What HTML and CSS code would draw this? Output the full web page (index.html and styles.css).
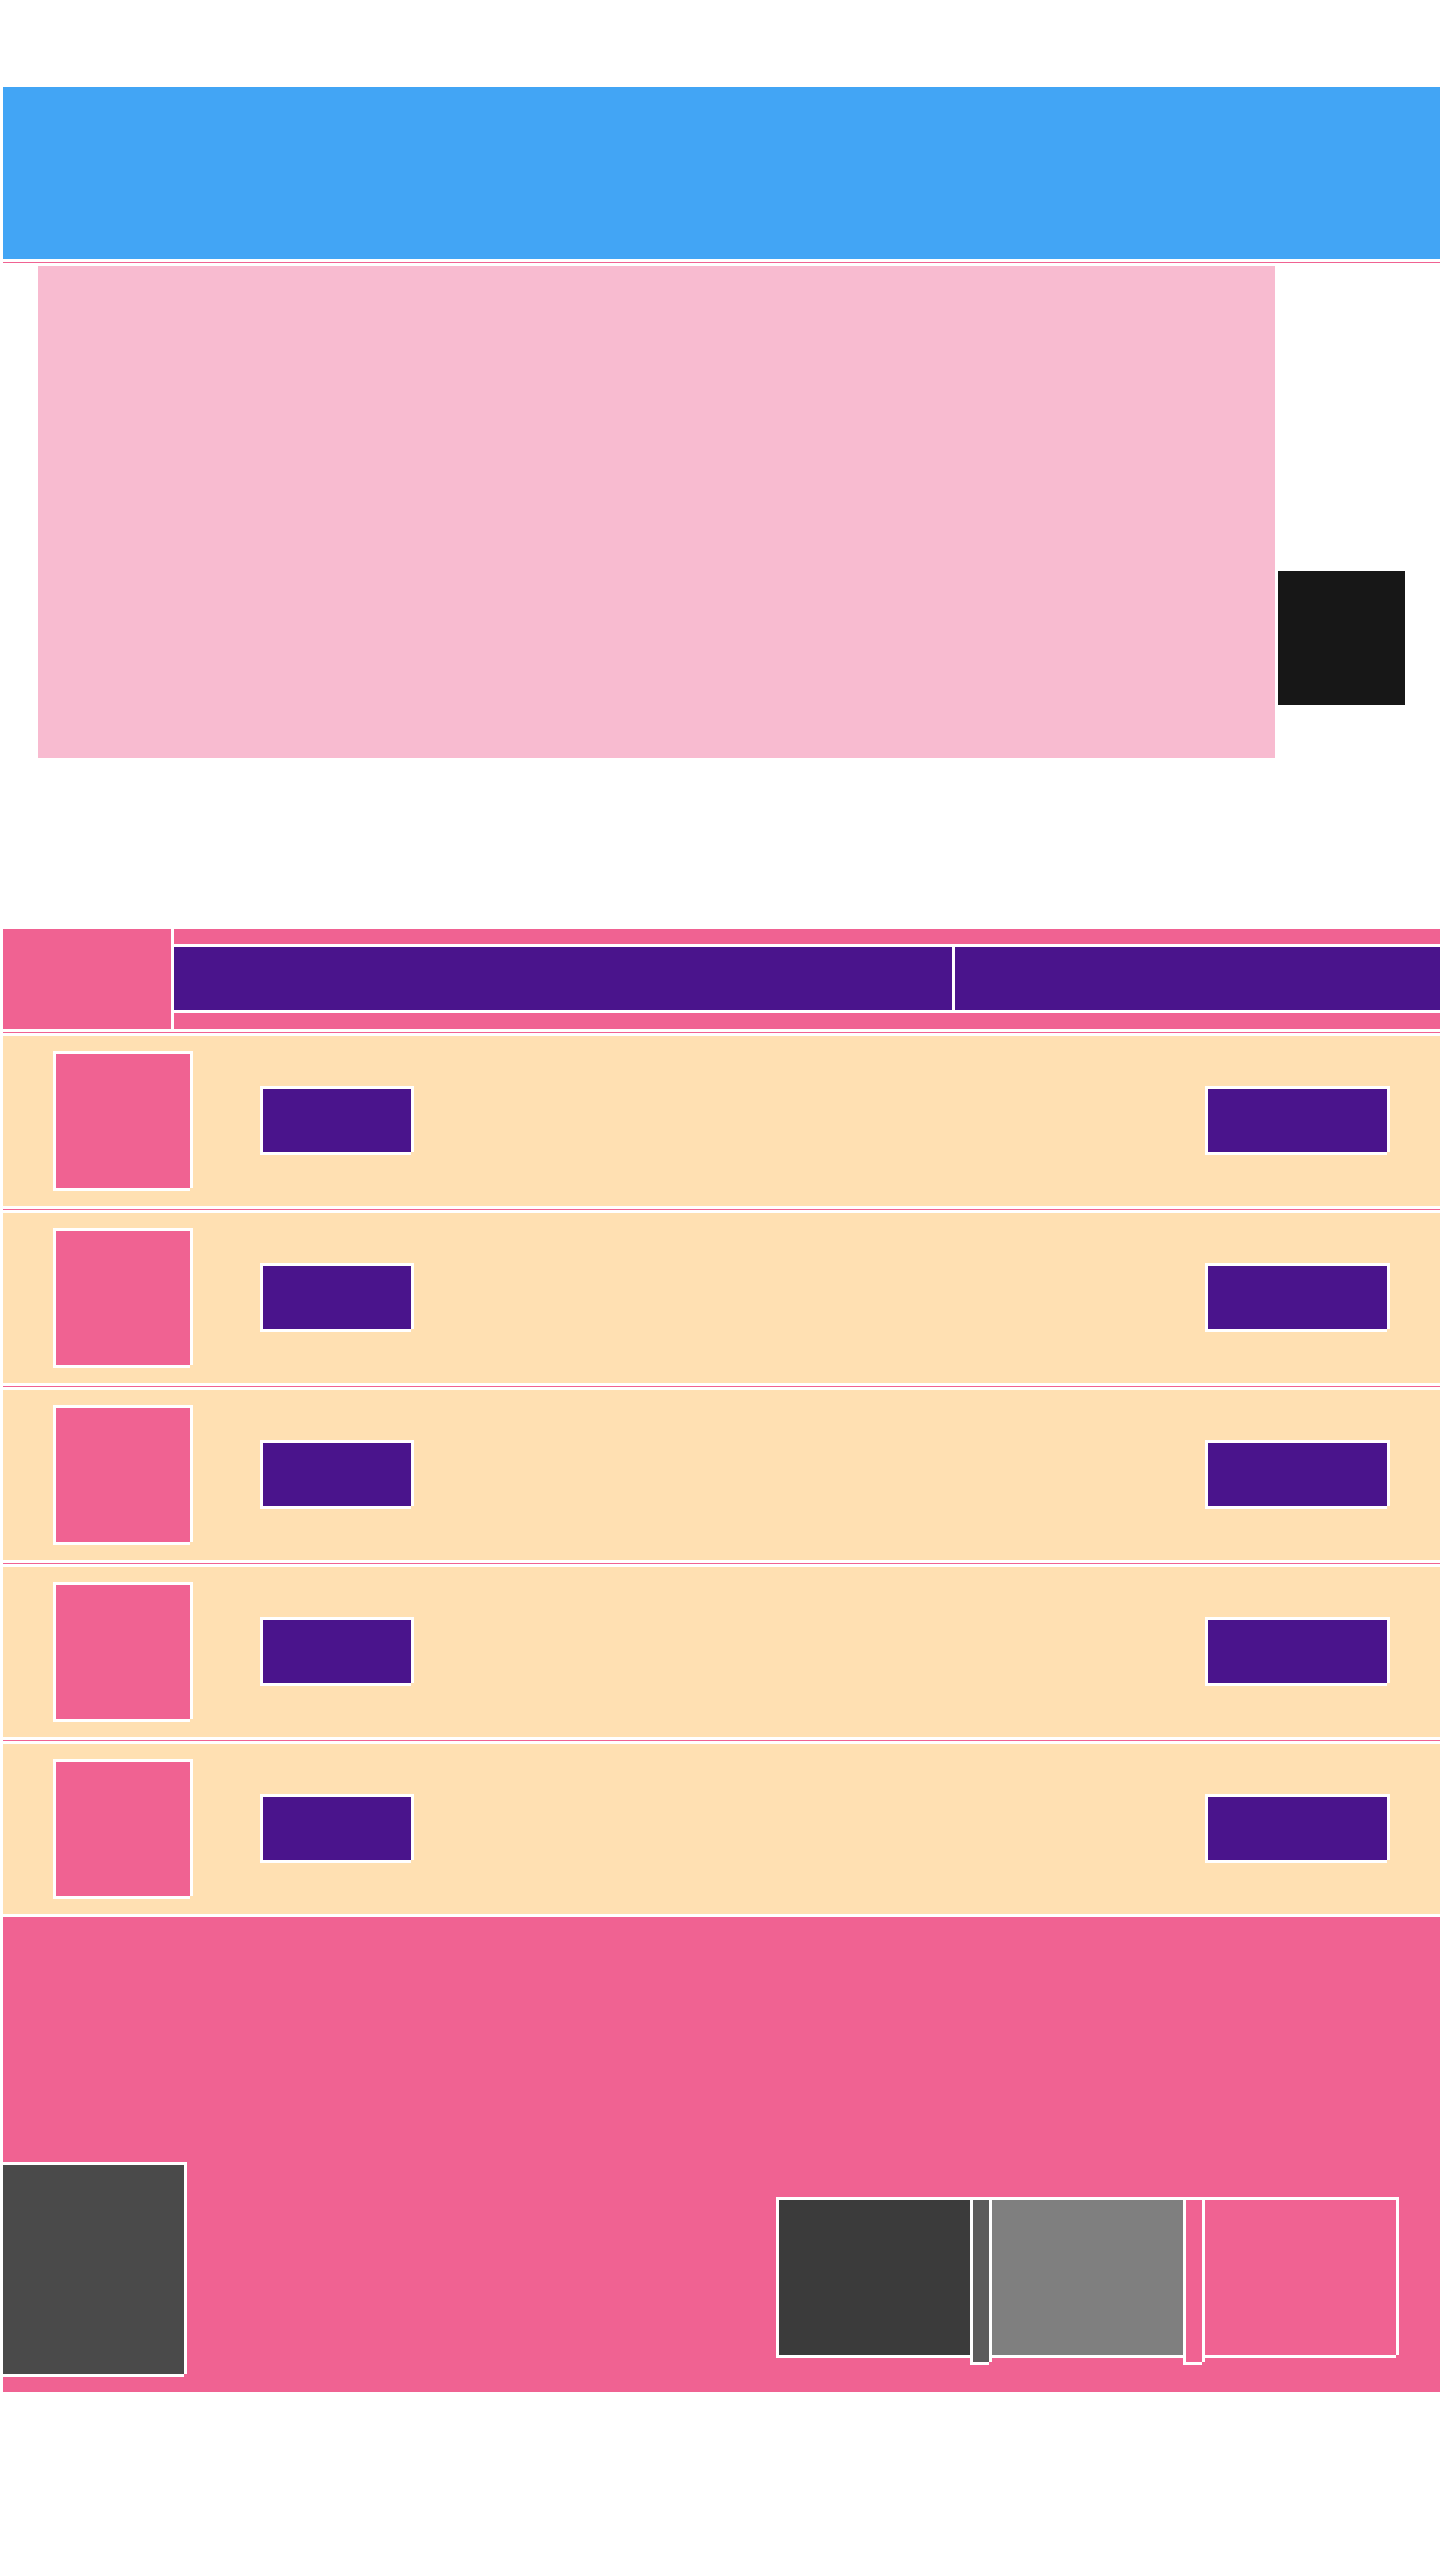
FILE: index.html
```html
<!DOCTYPE html>
<html lang="en">
<head>
<meta charset="utf-8">
<title>Layout</title>
<link rel="stylesheet" href="styles.css">
</head>
<body>
<div class="page">
  <header class="topbar"></header>
  <div class="rule"></div>
  <section class="hero">
    <div class="hero-panel"></div>
    <div class="hero-side"></div>
  </section>
  <section class="table">
    <div class="thead">
      <div class="thead-corner"></div>
      <div class="thead-main">
        <div class="thead-cols">
          <div class="thead-col thead-col-wide"></div>
          <div class="thead-col"></div>
        </div>
      </div>
    </div>
    <div class="rule"></div>
    <div class="trow"><div class="thumb framed"></div><div class="btn btn-left framed"></div><div class="btn btn-right framed"></div></div>
    <div class="rule"></div>
    <div class="trow"><div class="thumb framed"></div><div class="btn btn-left framed"></div><div class="btn btn-right framed"></div></div>
    <div class="rule"></div>
    <div class="trow"><div class="thumb framed"></div><div class="btn btn-left framed"></div><div class="btn btn-right framed"></div></div>
    <div class="rule"></div>
    <div class="trow"><div class="thumb framed"></div><div class="btn btn-left framed"></div><div class="btn btn-right framed"></div></div>
    <div class="rule"></div>
    <div class="trow"><div class="thumb framed"></div><div class="btn btn-left framed"></div><div class="btn btn-right framed"></div></div>
  </section>
  <footer class="footer">
    <div class="footer-block framed"></div>
    <div class="footer-group">
      <div class="tile tile-dark framed"></div>
      <div class="bar bar-dark framed"></div>
      <div class="tile tile-gray framed"></div>
      <div class="bar bar-pink framed"></div>
      <div class="tile tile-pink framed"></div>
    </div>
  </footer>
</div>
</body>
</html>
```
FILE: styles.css
```css
html, body {
  margin: 0;
  padding: 0;
  background: #ffffff;
}
body {
  font-family: "Liberation Sans", Arial, sans-serif;
  width: 1440px;
  min-height: 2560px;
  overflow: hidden;
}
.page {
  display: flex;
  flex-direction: column;
  padding-top: 87px;
  padding-left: 3px;
  width: 1437px;
}
.framed {
  border-top: 3px solid #ffffff;
  border-left: 3px solid #ffffff;
  box-shadow: 3px 0 0 #ffffff, 0 3px 0 #ffffff;
}
.topbar {
  height: 172px;
  background: #42a5f5;
}
.rule {
  height: 1px;
  margin: 3px 0;
  background: #f06292;
  flex: none;
}
.hero {
  display: flex;
  align-items: flex-start;
  padding-left: 35px;
  height: 492px;
  margin-bottom: 171px;
}
.hero-panel {
  width: 1237px;
  height: 492px;
  background: #f8bbd0;
  flex: none;
}
.hero-side {
  width: 127px;
  height: 134px;
  margin-left: 3px;
  margin-top: 305px;
  background: #171717;
  flex: none;
}
.table {
  display: flex;
  flex-direction: column;
}
.thead {
  display: flex;
  height: 100px;
}
.thead-corner {
  width: 168px;
  background: #f06292;
  flex: none;
}
.thead-main {
  flex: 1;
  margin-left: 3px;
  background: #f06292;
  display: flex;
  flex-direction: column;
  padding-top: 15px;
}
.thead-cols {
  display: flex;
  height: 63px;
  border-top: 3px solid #ffffff;
  border-bottom: 3px solid #ffffff;
}
.thead-col {
  flex: 1;
  background: #4a148c;
}
.thead-col-wide {
  flex: none;
  width: 778px;
  border-right: 3px solid #ffffff;
}
.trow {
  display: flex;
  align-items: flex-start;
  height: 170px;
  background: #ffe0b2;
  padding-left: 50px;
}
.thumb {
  width: 134px;
  height: 134px;
  margin-top: 15px;
  background: #f06292;
  flex: none;
}
.btn {
  height: 63px;
  margin-top: 50px;
  background: #4a148c;
  flex: none;
}
.btn-left {
  width: 148px;
  margin-left: 70px;
}
.btn-right {
  width: 179px;
  margin-left: auto;
  margin-right: 53px;
}
.footer {
  display: flex;
  align-items: flex-start;
  height: 475px;
  margin-top: 3px;
  background: #f06292;
  padding-right: 44px;
}
.footer-block {
  width: 181px;
  height: 209px;
  margin-top: 245px;
  border-left: 0;
  background: #4a4a4a;
  flex: none;
}
.footer-group {
  display: flex;
  align-items: flex-start;
  margin-left: auto;
  margin-top: 280px;
}
.tile {
  width: 191px;
  height: 155px;
  flex: none;
}
.bar {
  width: 16px;
  height: 162px;
  flex: none;
}
.tile-dark { background: #3b3b3b; }
.tile-gray { background: #7f7f7f; }
.tile-pink { background: #f06292; }
.bar-dark { background: #5b5b5b; }
.bar-pink { background: #f06292; }
```
